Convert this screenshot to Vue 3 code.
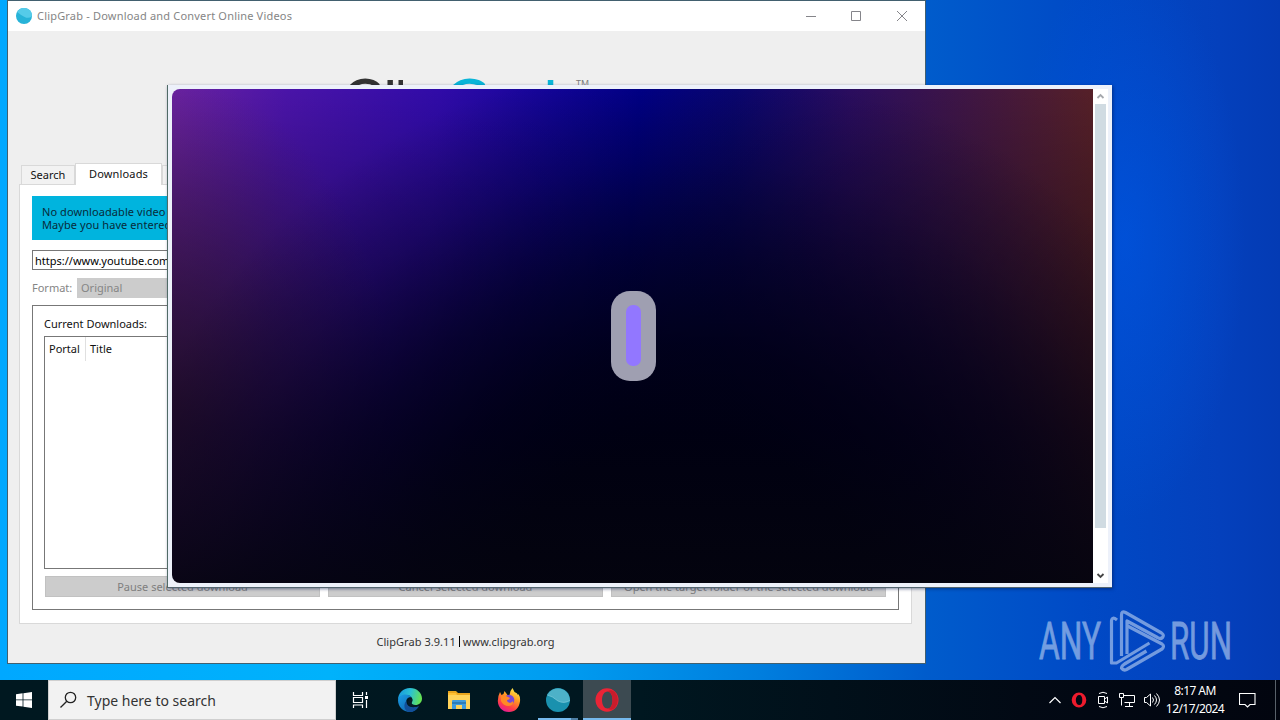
<template>
  <div class="desktop">
    <svg class="watermark" width="200" height="70" viewBox="0 0 200 70">
      <text x="4" y="52" textLength="62" lengthAdjust="spacingAndGlyphs">ANY</text>
      <text x="135" y="52" textLength="62" lengthAdjust="spacingAndGlyphs">RUN</text>
      <g fill="none" stroke-width="3.2" stroke-linejoin="round" stroke-linecap="butt">
        <path d="M82 13q-5-4-5.500 1V56h5l33-20" />
        <path d="M86.500 49V8q0-4.500 4-2.500L126.500 26q3 2 1 4.500q-2 2-5 0L92 14v33" />
        <path d="M92.500 19L127 37q3 2 0 5L91.500 62.500q-3 1.500-5-1.500q0-2 3-4l22-13" />
      </g>
    </svg>

    <!-- ClipGrab window -->
    <section class="window">
      <header class="titlebar">
        <svg class="app-icon" width="16" height="16" viewBox="0 0 24 24">
          <circle cx="12" cy="12" r="12" fill="#27b3d8" />
          <path d="M1.600 6a12 12 0 0 1 22.400 6.500q-5 4-11 1T1.600 6" fill="#55cbe9" />
        </svg>
        <span class="title">ClipGrab - Download and Convert Online Videos</span>
        <svg class="controls" width="104" height="12" viewBox="0 0 104 12">
          <path d="M1 6.500H11M46.500 1.500h9v9h-9zM92 1l10 10M102 1L92 11" fill="none" stroke="#85858a" />
        </svg>
      </header>
      <div class="brand">
        <svg width="260" height="80" viewBox="0 0 260 80">
          <text class="logo dark" x="1 43 55 68" y="60.500" dy="0 2">Clıp</text>
          <path class="dark" d="M58.500 17h4.500v6h-4.500z" />
          <text class="logo cyan" x="104.500 146 164 203.500" y="60.500" dy="0 2">Grab</text>
          <text class="tm" x="236" y="24">TM</text>
        </svg>
      </div>
      <nav class="tabs">
        <button v-for="tab in tabs" :key="tab" :class="{ active: tab === currentTab }" @click="currentTab = tab">{{ tab }}</button>
      </nav>
      <main class="panel">
        <div class="notice">No downloadable video could be found.<br>Maybe you have entered the wrong link?</div>
        <div class="url">https://www.youtube.com/</div>
        <div class="format">
          <span>Format:</span>
          <div class="select">Original</div>
        </div>
        <div class="group">
          <div class="group-title">Current Downloads:</div>
          <div class="table">
            <span class="portal">Portal</span>
            <span>Title</span>
          </div>
          <div class="actions">
            <button v-for="action in actions" :key="action" disabled>{{ action }}</button>
          </div>
        </div>
      </main>
      <footer class="about">ClipGrab 3.9.11 <i></i> www.clipgrab.org</footer>
    </section>

    <!-- loading popup -->
    <section class="popup">
      <div class="splash">
        <div class="loader"><span></span></div>
      </div>
      <div class="scrollbar">
        <svg width="15" height="15" viewBox="0 0 15 15"><path d="M4.500 9L7.500 6l3 3" fill="none" stroke="#a5a8ad" stroke-width="1.8" /></svg>
        <div class="thumb"></div>
        <svg width="15" height="15" viewBox="0 0 15 15"><path d="M4.500 6l3 3l3-3" fill="none" stroke="#444" stroke-width="1.8" /></svg>
      </div>
    </section>

    <footer class="taskbar">
      <div class="start">
        <svg width="16" height="16" viewBox="0 0 16 16"><path d="M0 2.200L6.600 1.300V7.500H0zM7.400 1.200L16 0V7.500H7.400zM0 8.300h6.600v6.300L0 13.700zM7.400 8.300H16V16L7.400 14.800z" fill="#fff" /></svg>
      </div>
      <div class="search">
        <svg width="18" height="18" viewBox="0 0 18 18"><g fill="none" stroke="#222" stroke-width="1.300"><circle cx="10.500" cy="6.500" r="5.200" /><path d="M6.800 10.200L.5 16.500" /></g></svg>
        <span>Type here to search</span>
      </div>
      <div class="task">
        <svg width="17" height="16" viewBox="0 0 17 16"><path d="M1.500 0v3.500h9V0M1.500 16v-3h9v3M1.500 5.500h9v5h-9zM14.500 0v3M14.500 8v8" fill="none" stroke="#fff" stroke-width="1.200" /><path d="M13 4h3v3h-3z" fill="#fff" /></svg>
      </div>
      <div class="task">
        <svg width="24" height="24" viewBox="0 0 24 24">
          <defs>
            <linearGradient id="edgeTop" x1="0" x2="1" y1=".3" y2=".5"><stop offset="0" stop-color="#1799e0" /><stop offset=".5" stop-color="#2cc2d2" /><stop offset="1" stop-color="#66e34f" /></linearGradient>
            <linearGradient id="edgeLow" x1="0" x2="1" y1="0" y2="1"><stop offset="0" stop-color="#1b9de6" /><stop offset="1" stop-color="#0c59a4" /></linearGradient>
          </defs>
          <path d="M0 12C0 5 5 0 12 0s12 5 12 10.500c0 4-3 6.500-6.500 6.500-3 0-4-1-4-2s1-1 1-3c0-3-3-5-6.500-5S1 9 0 12" fill="url(#edgeTop)" />
          <path d="M0 12c1-4 4-5.500 7.500-5.500 2.500 0 5 1 6.300 3-4-1-6 2-5.500 5.500.6 4.500 6.700 7 12.200 4C18 22.500 15 24 12 24 5 24 0 18.600 0 12" fill="url(#edgeLow)" />
          <path d="M8.300 13c0 5 5 8 12.700 5-3 4.500-6 6-9 6-6 0-7-8-3.700-11" fill="#124f99" />
          <path d="M14 10.500c1 2-.7 3.500-.5 4.800.5 1.500 2.500 2 4.500 1.700l3 .5q-5 3-9.500 0c-3-2-1.500-7 2.500-7" fill="#061c28" />
        </svg>
      </div>
      <div class="task">
        <svg width="22" height="20" viewBox="0 0 22 20">
          <path d="M0 1h8l2 2h12v4H0z" fill="#e9a51d" />
          <path d="M0 5h22v14H0z" fill="#ffd35a" />
          <path d="M0 3h8l1 2H0z" fill="#ffc033" />
          <path d="M4 19v-8q0-1 1-1h12q1 0 1 1v8h-4v-4H8v4z" fill="#3f9bdc" />
          <path d="M4 12h14v2H4z" fill="#2d7db8" />
        </svg>
      </div>
      <div class="task">
        <svg width="24" height="24" viewBox="0 0 24 24">
          <defs><linearGradient id="fox" x1=".8" y1="0" x2=".3" y2="1"><stop offset="0" stop-color="#fff14f" /><stop offset=".4" stop-color="#ff9a22" /><stop offset=".75" stop-color="#ff3d47" /><stop offset="1" stop-color="#e5199a" /></linearGradient></defs>
          <path d="M3 4l1.500 3 2-1 1-3 3 4h2l1-4 2-3 2 4q3 1 3.500 3l.500-1q2 3 1.500 7.500C22 20 18 24 12 24 5 24 1 19 .8 13q0-5 2.200-9" fill="url(#fox)" />
          <circle cx="12" cy="12" r="5.300" fill="#7948d8" />
          <path d="M4 8q4-1 7 1l2 1q-1 2-3 2c0 3 4 4 6 1q1 4-4 5-6 0-8-5z" fill="#ff8a25" />
        </svg>
      </div>
      <div class="task running">
        <svg width="24" height="24" viewBox="0 0 24 24">
          <circle cx="12" cy="12" r="12" fill="#1a91ae" />
          <path d="M1.300 7A12 12 0 0 1 24 12.500q-6 3.500-12 .5Q6 8 1.300 7" fill="#4db1c8" />
          <path d="M1.300 7q5 1 10.700 6 6 3 12-.5" fill="none" stroke="#80cddc" stroke-width=".7" />
        </svg>
      </div>
      <div class="task current">
        <svg width="24" height="24" viewBox="0 0 24 24">
          <path fill-rule="evenodd" d="M12 .3a11.500 11.700 0 1 0 0 23.400a11.500 11.700 0 1 0 0-23.400M12.500 3.500c3 0 5 3.500 5 8.500s-2 8.500-5 8.500s-5.500-3.500-5.500-8.500s2.500-8.500 5.500-8.500" fill="#ea2436" />
          <path d="M12.500 3.500c3-2 5-1.500 7.500.8a11.500 11.700 0 0 1 0 15.400c-2.500 2.300-4.500 2.800-7.500.8c3 0 5-3.500 5-8.500s-2-8.500-5-8.500" fill="#c91c2b" />
        </svg>
      </div>
      <div class="tray">
        <svg class="chevron" width="12" height="8" viewBox="0 0 12 8"><path d="M.5 7L6 1.500L11.500 7" fill="none" stroke="#fff" stroke-width="1.200" /></svg>
        <svg width="16" height="16" viewBox="0 0 16 16"><path fill-rule="evenodd" d="M8 .5a7.300 7.500 0 1 0 0 15a7.300 7.500 0 1 0 0-15M8.300 3c2 0 3 2 3 5s-1 5-3 5s-3.500-2-3.500-5s1.500-5 3.500-5" fill="#ee1b2d" /></svg>
        <svg width="16" height="18" viewBox="0 0 16 18"><path d="M3.500 5.500h6v7h-6zM9.500 8l3-2v6l-3-2M4 2.500q4-2.500 8 0M4 15.500q4 2.500 8 0" fill="none" stroke="#fff" /></svg>
        <svg width="16" height="16" viewBox="0 0 16 16"><path d="M5 3.500h10.500v7H5.500M10.500 10.500v4M6 14.500h8M.5 1.500h4v4h-4zM2.500 5.500v8" fill="none" stroke="#fff" /></svg>
        <svg width="18" height="16" viewBox="0 0 18 16"><path d="M1.500 5.500h2l4-3.500v12l-4-3.500h-2zM9.500 5.500q2 2.500 0 5M11.500 3.500q4 4.500 0 9M13.500 1.500q6 6.500 0 13" fill="none" stroke="#fff" /></svg>
        <div class="clock"><span>8:17 AM</span><span>12/17/2024</span></div>
        <svg class="note" width="17" height="17" viewBox="0 0 17 17"><path d="M.5 1.500h15.500v11H11L8.500 15L6 12.500H.5z" fill="none" stroke="#fff" stroke-width="1.100" /></svg>
        <i class="peek"></i>
      </div>
    </footer>
  </div>
</template>

<script setup>
import { ref } from 'vue'

const tabs = ['Search', 'Downloads', 'Settings']
const currentTab = ref('Downloads')
const actions = [
  'Pause selected download',
  'Cancel selected download',
  'Open the target folder of the selected download'
]
</script>

<style>
body {
  margin: 0;
  overflow: hidden;
}
</style>

<style scoped>
* {
  box-sizing: border-box;
}

.desktop {
  position: relative;
  width: 1280px;
  height: 720px;
  overflow: hidden;
  display: flex;
  flex-direction: column;
  justify-content: flex-end;
  font-family: "Noto Sans", "Open Sans", sans-serif;
  font-size: 11px;
  color: #111;
  background:
    radial-gradient(ellipse 120px 280px at 1125px 240px, rgba(0, 86, 228, .6), rgba(0, 80, 220, 0)),
    linear-gradient(90deg, #00a8ff 0, #00b2fb 330px, #009cf0 560px, #007ede 760px, #005ccc 925px, #004ac6 1080px, #0440bc 1220px, #043bb4 1280px);
}

svg {
  display: block;
  flex: none;
}

button {
  font: inherit;
  padding: 0;
  border: 0;
}

.watermark {
  position: absolute;
  left: 1035px;
  top: 607px;
  opacity: .68;
  fill: #a9c4ee;
  stroke: #a9c4ee;
}

.watermark text {
  font: 400 52px Roboto, sans-serif;
  stroke-width: .8px;
}

.window {
  position: absolute;
  left: 7px;
  top: 0;
  width: 919px;
  height: 664px;
  border: 1px solid #42606f;
  background: #efefef;
  display: flex;
  flex-direction: column;
}

.titlebar {
  height: 30px;
  flex: none;
  display: flex;
  align-items: center;
  padding: 0 16px 1px 8px;
  background: #fff;
}

.title {
  margin-left: 5px;
  flex: 1;
  color: #858585;
  white-space: nowrap;
  letter-spacing: .19px;
}

.brand {
  height: 132px;
  flex: none;
  padding: 32px 0 0 332px;
}

.logo {
  font: 400 61px Lato, sans-serif;
}

.dark {
  fill: #333;
}

.cyan {
  fill: #0ab5d8;
}

.tm {
  font: 9px "Open Sans", sans-serif;
  fill: #777;
}

.tabs {
  height: 21px;
  flex: none;
  padding-left: 13px;
  display: flex;
  align-items: flex-end;
}

.tabs button {
  width: 54px;
  height: 19px;
  padding-bottom: 2px;
  border: 1px solid #d9d9d9;
  border-bottom: 0;
  background: #f2f2f2;
  color: #111;
}

.tabs button.active {
  width: 87px;
  height: 22px;
  margin-bottom: -1px;
  padding-bottom: 3px;
  background: #fff;
  letter-spacing: .15px;
  z-index: 1;
}

.panel {
  width: 893px;
  height: 440px;
  flex: none;
  margin-left: 11px;
  padding: 11px 12px;
  border: 1px solid #d9d9d9;
  background: #fff;
  display: flex;
  flex-direction: column;
  white-space: nowrap;
}

.notice {
  height: 44px;
  padding: 9px 10px;
  line-height: 13px;
  letter-spacing: .08px;
  background: #00b4de;
  color: #082b3a;
}

.url {
  height: 20px;
  margin-top: 10px;
  padding-left: 2px;
  line-height: 19px;
  border: 1px solid #777;
  color: #000;
}

.format {
  height: 20px;
  margin-top: 8px;
  display: flex;
  line-height: 20px;
  color: #858585;
}

.format span {
  width: 45px;
}

.select {
  flex: 1;
  padding-left: 4px;
  background: #ccc;
}

.group {
  height: 305px;
  margin-top: 7px;
  padding: 10px 12px 12px 11px;
  border: 1px solid #777;
  display: flex;
  flex-direction: column;
}

.group-title {
  height: 20px;
  line-height: 15px;
}

.table {
  flex: 1;
  display: flex;
  border: 1px solid #777;
  line-height: 24px;
}

.table span {
  height: 24px;
  padding-left: 4px;
}

.portal {
  width: 41px;
  border-right: 1px solid #e0e0e0;
}

.actions {
  display: flex;
  gap: 8px;
  margin: 7px 0 0 1px;
}

.actions button {
  width: 275px;
  height: 21px;
  background: #ccc;
  border: 1px solid #c1c1c1;
  color: #7e7e7e;
}

.about {
  flex: 1;
  display: flex;
  align-items: center;
  justify-content: center;
  gap: 3px;
  padding: 0 2px 4px 0;
  letter-spacing: .05px;
  color: #333;
}

.about i {
  width: 1px;
  height: 11px;
  background: #000;
}

.popup {
  position: absolute;
  left: 167px;
  top: 85px;
  width: 945px;
  height: 503px;
  padding: 4px;
  display: flex;
  border-left: 1px solid #506b66;
  border-bottom: 1px solid #53656f;
  background: #edf1fa;
  box-shadow: 1px 1px 3px rgba(0, 20, 70, .5);
}

/* dark glow rising from the bottom over a purple / blue / rust sweep */
.splash {
  width: 921px;
  height: 494px;
  border-radius: 8px 0 0 8px;
  display: flex;
  align-items: center;
  justify-content: center;
  padding-bottom: 1px;
  background:
    linear-gradient(180deg, rgba(0, 0, 18, 0) 0, rgba(0, 0, 18, .24) 110px, rgba(0, 0, 18, .45) 220px, rgba(0, 0, 16, .66) 340px, rgba(4, 4, 14, .92) 494px),
    radial-gradient(ellipse 580px 560px at 515px 530px, #000012 0, #000014 32%, rgba(0, 0, 26, .88) 48%, rgba(0, 0, 32, .64) 64%, rgba(0, 0, 32, .26) 82%, rgba(0, 0, 32, 0) 100%),
    radial-gradient(ellipse 220px 330px at 0 320px, rgba(78, 32, 66, .8), rgba(68, 28, 60, 0)),
    linear-gradient(94deg, #6a22a0 0, #4a14a8 12%, #300ba8 28%, #12049a 40%, #00008c 49%, #0a0674 59%, #2b0d60 71%, #421740 85%, #5a2222 99%);
}

.loader {
  width: 45px;
  height: 90px;
  margin-left: 1px;
  border-radius: 19px;
  background: #9f9fb1;
  display: flex;
  align-items: center;
  justify-content: center;
}

.loader span {
  width: 15px;
  height: 61px;
  border-radius: 7px;
  background: #9277ff;
}

.scrollbar {
  width: 15px;
  height: 494px;
  background: #fff;
  display: flex;
  flex-direction: column;
}

.scrollbar svg:last-child {
  margin-top: auto;
}

.thumb {
  width: 11px;
  height: 424px;
  margin-left: 2px;
  background: #d0dbe2;
}

.taskbar {
  height: 40px;
  display: flex;
  background: linear-gradient(90deg, #001820, #001720 50%, #020914 80%, #02050f);
}

.start {
  width: 48px;
  display: flex;
  align-items: center;
  justify-content: center;
}

.search {
  width: 288px;
  padding-left: 11px;
  border: 1px solid #cfcfcf;
  background: #f2f2f2;
  display: flex;
  align-items: center;
  gap: 9px;
  font-size: 14px;
  color: #333;
}

.task {
  width: 49.4px;
  display: flex;
  align-items: center;
  justify-content: center;
}

.running {
  width: 49px;
  background: linear-gradient(90deg, transparent 4px, #76b9ed 4px 37px, #4d7ea4 37px 44px, transparent 44px) bottom / 100% 2px no-repeat;
}

.current {
  width: 48px;
  border-bottom: 2px solid #76b9ed;
  padding-top: 2px;
  background: #3c4a51;
}

.tray {
  margin-left: auto;
  display: flex;
  align-items: center;
  gap: 8px;
  color: #fff;
}

.chevron {
  margin-right: 2px;
}

.clock {
  width: 60px;
  margin-left: -4px;
  display: flex;
  flex-direction: column;
  align-items: center;
  font-size: 12px;
  line-height: 18px;
  letter-spacing: -.55px;
}

.note {
  margin-left: 6px;
}

.peek {
  width: 1px;
  height: 40px;
  margin: 0 4px 0 11px;
  background: #59616a;
}
</style>
